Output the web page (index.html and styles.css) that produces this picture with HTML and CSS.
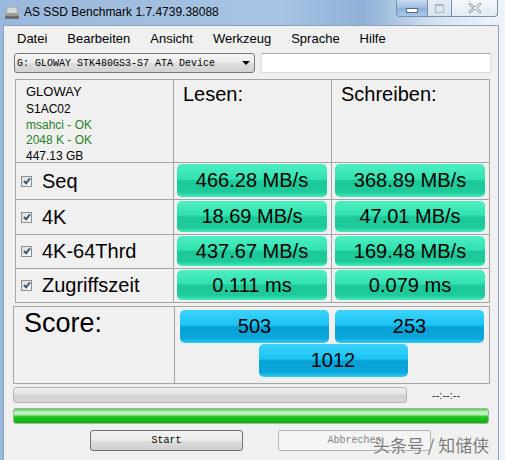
FILE: index.html
```html
<!DOCTYPE html>
<html lang="de">
<head>
    <meta charset="UTF-8">
    <meta name="viewport" content="width=device-width, initial-scale=1.0">
    <title>AS SSD Benchmark</title>
    <link rel="stylesheet" href="styles.css">
</head>
<body>
    <div class="window">
        <div class="titlebar">
            <svg class="app-icon" width="16" height="16" viewBox="0 0 16 16">
                <path d="M3 3 L13 3 L15 13 L1 13 Z" fill="#9a9a9a"/>
                <path d="M3.5 3.5 L12.5 3.5 L13.5 9 L2.5 9 Z" fill="#d8d8d8"/>
                <rect x="1" y="12" width="14" height="3" fill="#6e6e6e"/>
            </svg>
            <span class="title">AS SSD Benchmark 1.7.4739.38088</span>
            <div class="caption-buttons">
                <span class="cap cap-min"><span class="min-glyph"></span></span>
                <span class="cap cap-max"><span class="max-glyph"></span></span>
                <span class="cap cap-close">
                    <svg width="14" height="12" viewBox="0 0 14 12">
                        <path d="M2 1 L7 5 L12 1 L13 2.5 L9 6 L13 9.5 L12 11 L7 7 L2 11 L1 9.5 L5 6 L1 2.5 Z" fill="#fff" stroke="#8a98a8" stroke-width="1"/>
                    </svg>
                </span>
            </div>
        </div>

        <div class="client">
            <div class="menu">
                <span>Datei</span>
                <span>Bearbeiten</span>
                <span>Ansicht</span>
                <span>Werkzeug</span>
                <span>Sprache</span>
                <span>Hilfe</span>
            </div>

            <div class="drive-row">
                <div class="select">
                    <span>G: GLOWAY STK480GS3-S7 ATA Device</span>
                    <span class="arrow"></span>
                </div>
                <div class="textbox"></div>
            </div>

            <div class="results">
                <div class="cell info">
                    <div class="drive-name">GLOWAY</div>
                    <div>S1AC02</div>
                    <div class="ok">msahci - OK</div>
                    <div class="ok">2048 K - OK</div>
                    <div>447.13 GB</div>
                </div>
                <div class="cell head">Lesen:</div>
                <div class="cell head">Schreiben:</div>

                <div class="cell label"><span class="check"></span>Seq</div>
                <div class="cell value"><div class="bar">466.28 MB/s</div></div>
                <div class="cell value"><div class="bar">368.89 MB/s</div></div>

                <div class="cell label"><span class="check"></span>4K</div>
                <div class="cell value"><div class="bar">18.69 MB/s</div></div>
                <div class="cell value"><div class="bar">47.01 MB/s</div></div>

                <div class="cell label"><span class="check"></span>4K-64Thrd</div>
                <div class="cell value"><div class="bar">437.67 MB/s</div></div>
                <div class="cell value"><div class="bar">169.48 MB/s</div></div>

                <div class="cell label"><span class="check"></span>Zugriffszeit</div>
                <div class="cell value"><div class="bar">0.111 ms</div></div>
                <div class="cell value"><div class="bar">0.079 ms</div></div>
            </div>

            <div class="score">
                <div class="cell score-label">Score:</div>
                <div class="cell score-values">
                    <div class="bar blue">503</div>
                    <div class="bar blue">253</div>
                    <div class="bar blue total">1012</div>
                </div>
            </div>

            <div class="progress-row">
                <div class="progress"></div>
                <span class="time">--:--:--</span>
            </div>
            <div class="total-progress"></div>

            <div class="buttons">
                <span class="button">Start</span>
                <span class="button disabled">Abbrechen</span>
            </div>

            <span class="watermark">头条号 / 知储侠</span>
        </div>
    </div>
</body>
</html>
```

FILE: styles.css
```css
body {
    margin: 0;
    width: 505px;
    height: 460px;
    overflow: hidden;
    font-family: "Liberation Sans", Arial, sans-serif;
    background: linear-gradient(90deg, #9ab8db 0%, #a8c4e4 55%, #8fb0d6 72%, #d4e3f2 86%, #eef4fa 100%);
}
.window {
    display: flex;
    flex-direction: column;
    height: 460px;
}
.titlebar {
    height: 25px;
    display: flex;
    align-items: flex-start;
    flex-shrink: 0;
}
.app-icon {
    margin: 4px 0 0 4px;
}
.title {
    font-size: 12px;
    line-height: 24px;
    margin-left: 4px;
    color: #000;
}
.caption-buttons {
    margin-left: auto;
    margin-right: 7px;
    display: flex;
    height: 17px;
}
.cap {
    display: flex;
    align-items: center;
    justify-content: center;
    height: 16px;
    border: 1px solid #7d8fa6;
    border-top: none;
}
.cap-min {
    width: 30px;
    border-radius: 0 0 0 4px;
    background: linear-gradient(#c9dcf0, #9dbce0 50%, #8cb0da 51%, #a9c8ea);
}
.min-glyph {
    width: 10px;
    height: 3px;
    background: #fff;
    border: 1px solid #4f6a8c;
    margin-top: 4px;
}
.cap-max {
    width: 23px;
    border-left: none;
    background: linear-gradient(#e4edf6, #d6e3f0);
}
.max-glyph {
    width: 7px;
    height: 6px;
    border: 1px solid #a8b8c8;
    border-top-width: 2px;
}
.cap-close {
    width: 45px;
    border-left: none;
    border-radius: 0 0 4px 0;
    background: linear-gradient(#f4f7fb, #e4ebf3);
}
.client {
    position: relative;
    flex: 1;
    margin-left: 3px;
    width: 496px;
    border: 1px solid #8aa0bb;
    border-bottom: none;
    background: #f0f0f0;
    padding-left: 9px;
    box-sizing: border-box;
}
.menu {
    display: flex;
    gap: 20px;
    padding: 1px 0 0 4px;
    font-size: 13px;
    line-height: 24px;
    height: 25px;
}
.drive-row {
    display: flex;
    margin-top: 1px;
    height: 20px;
}
.select {
    width: 237px;
    height: 18px;
    margin-left: 1px;
    border: 1px solid #7a7a7a;
    border-radius: 3px;
    background: linear-gradient(#f5f5f5, #ebebeb 50%, #dddddd 51%, #d2d2d2);
    display: flex;
    align-items: center;
    font-family: "Liberation Mono", monospace;
    font-size: 10px;
    padding-left: 2px;
}
.arrow {
    margin-left: auto;
    margin-right: 4px;
    width: 0;
    height: 0;
    border-left: 4px solid transparent;
    border-right: 4px solid transparent;
    border-top: 4px solid #000;
}
.textbox {
    margin-left: 6px;
    width: 228px;
    height: 18px;
    background: #fff;
    border: 1px solid #d8dde3;
    border-top-color: #abadb3;
}
.results {
    margin: 6px 0 0 2px;
    width: 475px;
    display: grid;
    grid-template-columns: 157px 157px 157px;
    grid-template-rows: 82px 36px 34px 33px 33px;
    gap: 1px;
    padding: 1px;
    box-sizing: border-box;
    background: #a5a5a5;
}
.cell {
    background: #f0f0f0;
}
.info {
    padding: 3px 0 0 10px;
    font-size: 12px;
    line-height: 15.5px;
}
.drive-name {
    font-size: 13px;
    line-height: 18px;
    margin-bottom: 1px;
}
.ok {
    color: #2b7f2b;
}
.head {
    padding: 2px 0 0 9px;
    font-size: 20px;
    line-height: 24px;
}
.label {
    display: flex;
    align-items: center;
    padding-left: 5px;
    font-size: 20px;
}
.check {
    width: 9px;
    height: 9px;
    margin-right: 10px;
    border: 1px solid #8e8f8f;
    background: linear-gradient(135deg, #dcdcdc, #fbfbfb) no-repeat;
    position: relative;
}
.check::after {
    content: "";
    position: absolute;
    left: 3px;
    top: 0;
    width: 2px;
    height: 5px;
    border: solid #3c5a7a;
    border-width: 0 2px 2px 0;
    transform: rotate(40deg);
}
.value {
    padding: 1px 4px 2px 3px;
}
.bar {
    height: 100%;
    border-radius: 5px;
    display: flex;
    align-items: center;
    justify-content: center;
    font-size: 20px;
    background: linear-gradient(#4eeec3 0%, #32e2b0 45%, #1ec898 52%, #1fcb9a 85%, #44ebbd 100%);
    box-sizing: border-box;
}
.score {
    margin-top: 3px;
    width: 477px;
    display: grid;
    grid-template-columns: 160px 314px;
    grid-template-rows: 76px;
    gap: 1px;
    padding: 1px;
    box-sizing: border-box;
    background: #a5a5a5;
}
.score-label {
    padding: 1px 0 0 10px;
    font-size: 27px;
    line-height: 30px;
}
.score-values {
    display: grid;
    grid-template-columns: 149px 149px;
    grid-template-rows: 33px 33px;
    column-gap: 6px;
    row-gap: 1px;
    padding: 3px 0 0 5px;
}
.bar.blue {
    background: linear-gradient(#3cd3fb 0%, #1bc3f3 45%, #07a0d5 52%, #0aa6d9 85%, #2ccaf6 100%);
}
.bar.total {
    grid-column: 1 / 3;
    width: 149px;
    justify-self: center;
    margin-left: 2px;
}
.progress-row {
    margin-top: 3px;
    display: flex;
    align-items: center;
    height: 16px;
}
.progress {
    width: 392px;
    height: 14px;
    border: 1px solid #b4b4b4;
    border-radius: 3px;
    background: linear-gradient(#f0f0f0, #e2e2e2 45%, #cfcfcf 55%, #d8d8d8);
}
.time {
    margin-left: 25px;
    font-size: 11px;
    color: #222;
}
.total-progress {
    margin-top: 5px;
    width: 474px;
    height: 14px;
    border: 1px solid #9cb49c;
    border-radius: 3px;
    background: linear-gradient(#4ccc4c 0%, #c6f6c6 22%, #b0efb0 40%, #22c622 55%, #0fae0f 100%);
}
.buttons {
    margin-top: 6px;
    display: flex;
    gap: 35px;
    padding-left: 77px;
}
.button {
    width: 151px;
    height: 19px;
    border: 1px solid #707070;
    border-radius: 3px;
    background: linear-gradient(#f2f2f2, #ebebeb 50%, #dddddd 51%, #cfcfcf);
    font-family: "Liberation Mono", monospace;
    font-size: 10px;
    line-height: 19px;
    text-align: center;
}
.button.disabled {
    border-color: #adb2b5;
    background: #f4f4f4;
    color: #838383;
}
.watermark {
    position: absolute;
    left: 369px;
    top: 406px;
    font-family: "Noto Sans CJK SC", sans-serif;
    font-size: 17px;
    color: #7a7a7a;
    text-shadow: 0 0 2px #fff;
    white-space: nowrap;
}
```
